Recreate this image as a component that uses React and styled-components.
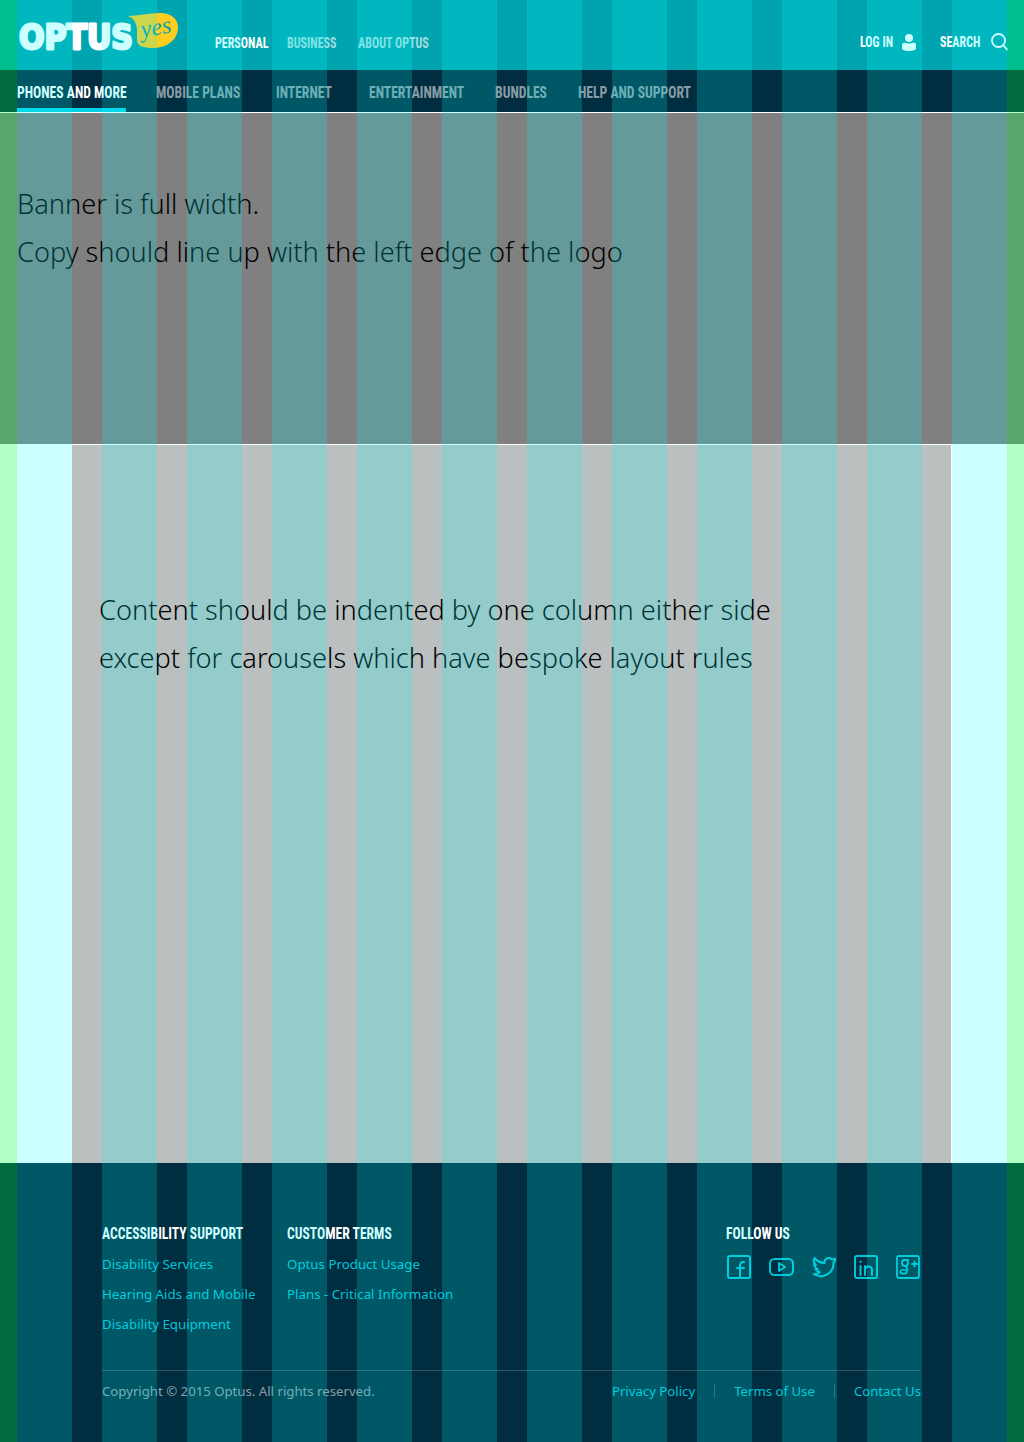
import styled, { createGlobalStyle } from 'styled-components'

const GlobalStyle = createGlobalStyle`
    html, body { margin: 0; padding: 0; background: #fff; }
    body { font-family: "Noto Sans", "DejaVu Sans", sans-serif; }
    a { text-decoration: none; color: inherit; }
`

const condensed = `"Roboto Condensed", Roboto, "Liberation Sans", sans-serif`
const linkColor = '#00c4d6'

const Page = styled.div`
    position: relative;
    width: 1024px;
    height: 1442px;
    overflow: hidden;
`

/* grid overlay, sits on top of the whole page */
const GridOverlay = styled.div`
    position: absolute;
    inset: 0;
    display: flex;
    justify-content: space-between;
    pointer-events: none;
`
const GridMargin = styled.div`
    width: 17px;
    background: rgba(0, 255, 66, .3);
`
const GridColumns = styled.div`
    display: flex;
    gap: 30px;
`
const GridColumn = styled.div`
    width: 55px;
    background: rgba(0, 255, 255, .2);
`

/* the heading face is far narrower than anything installed */
const Narrow = styled.span`
    display: block;
    width: ${p => p.$width}px;
    white-space: nowrap;
    transform: scaleX(.8);
    transform-origin: left center;
`

const TopBar = styled.header`
    height: 70px;
    background: #00a4af;
    display: flex;
    padding: 0 16px 0 18px;
    box-sizing: border-box;
`
const LogoWrap = styled.div`
    width: 197px;
    flex: none;
    padding-top: 9px;
`
const TopLinks = styled.nav`
    display: flex;
    gap: 19px;
    padding-top: 34px;
`
const TopLink = styled.a`
    font-family: ${condensed};
    font-weight: 700;
    font-size: 15px;
    line-height: 18px;
    color: ${p => (p.$active ? '#fff' : 'rgba(255,255,255,.65)')};
`
const TopRight = styled.div`
    margin-left: auto;
    display: flex;
    align-items: center;
    gap: 24px;
    padding-top: 14px;
    height: 56px;
`
const TopAction = styled.a`
    display: flex;
    align-items: center;
    gap: 10px;
    font-family: ${condensed};
    font-weight: 700;
    font-size: 15px;
    color: #fff;
`

const MainNav = styled.nav`
    height: 42px;
    background: #002d40;
    border-bottom: 1px solid #fff;
    display: flex;
    padding-left: 17px;
`
const MainLink = styled.a`
    height: 42px;
    box-sizing: border-box;
    padding-top: 12px;
    margin-right: ${p => p.$gap}px;
    font-family: ${condensed};
    font-weight: 700;
    font-size: 17px;
    line-height: 20px;
    color: ${p => (p.$active ? '#fff' : 'rgba(255,255,255,.55)')};
    border-bottom: 4px solid ${p => (p.$active ? '#00d0e4' : 'transparent')};
`

const Banner = styled.section`
    height: 331px;
    background: #808080;
    padding: 67px 0 0 17px;
    box-sizing: border-box;
`
const Copy = styled.p`
    margin: 0;
    font-family: "Noto Sans", sans-serif;
    font-weight: 300;
    font-size: 27.2px;
    line-height: 48px;
    color: #000;
`
const Content = styled.main`
    height: 718px;
    margin: 1px 73px 0 72px;
    padding: 141px 0 0 27px;
    box-sizing: border-box;
    background: #babfbf;
`

const Footer = styled.footer`
    height: 279px;
    background: #002d40;
    padding: 60px 104px 0 102px;
    box-sizing: border-box;
`
const FooterTop = styled.div`
    display: flex;
    height: 147px;
    border-bottom: 1px solid rgba(255,255,255,.2);
`
const FooterCol = styled.div`
    width: ${p => p.$width}px;
    flex: none;
`
const FooterHeading = styled.h4`
    margin: 0 0 6px;
    font-family: ${condensed};
    font-weight: 700;
    font-size: 17px;
    line-height: 20px;
    color: #fff;
`
const FooterLink = styled.a`
    display: block;
    font-size: 13.3px;
    line-height: 30px;
    color: ${linkColor};
`
const SocialRow = styled.div`
    display: flex;
    align-items: center;
    gap: 18px;
    margin: 12px 0 0 1px;
    height: 24px;
`
const FooterBottom = styled.div`
    display: flex;
    align-items: center;
    height: 40px;
    font-size: 13.2px;
    color: rgba(255,255,255,.55);
`
const LegalLinks = styled.div`
    margin: 0 -1px 0 auto;
    display: flex;
    align-items: center;
`
const LegalLink = styled.a`
    color: ${linkColor};
`
const LegalSep = styled.span`
    width: 1px;
    height: 14px;
    margin: 0 19px;
    background: rgba(255,255,255,.2);
`

const stroke = { fill: 'none', stroke: linkColor, strokeWidth: 2, strokeLinecap: 'round', strokeLinejoin: 'round' }

const LogoMark = () => (
    <svg width="162" height="52" viewBox="0 -4 162 52">
        <path d="M110 3C120 3 130 0 142 0C153 0 160 6 160 14C160 26 150 35 135 35C125 35 119 33 119 27C119 18 121 8 110 3z" fill="#ffcc20" />
        <text
            x="123"
            y="22"
            transform="rotate(-10 138 18)"
            fontFamily="Liberation Serif, serif"
            fontStyle="italic"
            fontSize="24"
            fill="#00a4af"
        >
            yes
        </text>
        <text
            transform="translate(1 36) scale(.91 1)"
            fontFamily="DejaVu Sans, sans-serif"
            fontWeight="700"
            fontSize="33"
            fill="#fff"
            stroke="#fff"
            strokeWidth="2.800"
            strokeLinejoin="round"
        >
            OPTUS
        </text>
    </svg>
)

const UserIcon = () => (
    <svg width="14" height="17" viewBox="0 0 14 17" fill="#fff">
        <circle cx="7" cy="4" r="4" />
        <path d="M0 11c0-1.500 1.500-2.500 3-2.200 2.500 1 5.500 1 8 0 1.500-.3 3-.3 3 2.200v3.500c0 1.500-3 2.500-7 2.500s-7-1-7-2.500z" />
    </svg>
)
const SearchIcon = () => (
    <svg width="17" height="18" viewBox="0 0 17 18" fill="none" stroke="#fff" strokeWidth="1.800" strokeLinecap="round">
        <circle cx="7.500" cy="7.500" r="6.500" />
        <path d="M12.500 12.500l3.500 4" />
    </svg>
)
const FacebookIcon = () => (
    <svg width="24" height="24" viewBox="0 0 24 24" {...stroke}>
        <rect x="1" y="1" width="22" height="22" rx="2" />
        <path d="M13 23V11a3.500 3.500 0 0 1 4-4M10 13h7" />
    </svg>
)
const YoutubeIcon = () => (
    <svg width="25" height="18" viewBox="0 0 25 18" {...stroke}>
        <rect x="1" y="1" width="23" height="16" rx="4.500" />
        <path d="M10 5v8l6-4z" />
    </svg>
)
const TwitterIcon = () => (
    <svg width="24" height="22" viewBox="0 0 24 22" {...stroke}>
        <path d="M23 2.500c-.9.7-1.800 1-2.800 1.100a4.400 4.400 0 0 0-7.700 3.400C8.800 7 5.200 5.300 2.500 2c-1.300 2.500-.6 5.400 1.600 7l-1.900-.5c.2 2.300 1.500 3.800 3.600 4.600l-2 .2c.8 1.700 2 2.600 4 3-1.600 1.300-3.700 2-6 1.900 9.500 5 19.800-.5 19.700-11.500.8-.7 1.500-1.500 1.700-2.600z" />
    </svg>
)
const LinkedinIcon = () => (
    <svg width="24" height="24" viewBox="0 0 24 24" {...stroke}>
        <rect x="1" y="1" width="22" height="22" rx="2" />
        <path d="M6.500 11v9M6.500 6.500v.5M11 20v-9M11 15a3.500 3.500 0 0 1 7 0v5" />
    </svg>
)
const GooglePlusIcon = () => (
    <svg width="24" height="24" viewBox="0 0 24 24" {...stroke} strokeWidth="1.800">
        <rect x="1" y="1" width="22" height="22" rx="2" />
        <circle cx="9" cy="8" r="3" />
        <path d="M12 5h-4M9 11c3 2 3 3 2 4.500M11 16.500c-.5-1.500-3-2-5-1.500s-2.500 3 0 3.500 5 0 5-2M16 9h5M18.500 6.500v5" />
    </svg>
)

function App() {
    return (
        <>
            <GlobalStyle />
            <Page>
                <TopBar>
                    <LogoWrap>
                        <LogoMark />
                    </LogoWrap>
                    <TopLinks>
                        <TopLink $active><Narrow $width={53}>PERSONAL</Narrow></TopLink>
                        <TopLink><Narrow $width={52}>BUSINESS</Narrow></TopLink>
                        <TopLink><Narrow $width={70}>ABOUT OPTUS</Narrow></TopLink>
                    </TopLinks>
                    <TopRight>
                        <TopAction>
                            <Narrow $width={32}>LOG IN</Narrow>
                            <UserIcon />
                        </TopAction>
                        <TopAction>
                            <Narrow $width={41}>SEARCH</Narrow>
                            <SearchIcon />
                        </TopAction>
                    </TopRight>
                </TopBar>
                <MainNav>
                    <MainLink $active $gap={30}><Narrow $width={109}>PHONES AND MORE</Narrow></MainLink>
                    <MainLink $gap={37}><Narrow $width={83}>MOBILE PLANS</Narrow></MainLink>
                    <MainLink $gap={36}><Narrow $width={57}>INTERNET</Narrow></MainLink>
                    <MainLink $gap={30}><Narrow $width={96}>ENTERTAINMENT</Narrow></MainLink>
                    <MainLink $gap={30}><Narrow $width={53}>BUNDLES</Narrow></MainLink>
                    <MainLink $gap={0}><Narrow $width={112}>HELP AND SUPPORT</Narrow></MainLink>
                </MainNav>
                <Banner>
                    <Copy>Banner is full width.</Copy>
                    <Copy>Copy should line up with the left edge of the logo</Copy>
                </Banner>
                <Content>
                    <Copy>Content should be indented by one column either side</Copy>
                    <Copy>except for carousels which have bespoke layout rules</Copy>
                </Content>
                <Footer>
                    <FooterTop>
                        <FooterCol $width={185}>
                            <FooterHeading><Narrow $width={142}>ACCESSIBILITY SUPPORT</Narrow></FooterHeading>
                            <FooterLink>Disability Services</FooterLink>
                            <FooterLink>Hearing Aids and Mobile</FooterLink>
                            <FooterLink>Disability Equipment</FooterLink>
                        </FooterCol>
                        <FooterCol $width={439}>
                            <FooterHeading><Narrow $width={106}>CUSTOMER TERMS</Narrow></FooterHeading>
                            <FooterLink>Optus Product Usage</FooterLink>
                            <FooterLink>Plans - Critical Information</FooterLink>
                        </FooterCol>
                        <FooterCol $width={194}>
                            <FooterHeading><Narrow $width={65}>FOLLOW US</Narrow></FooterHeading>
                            <SocialRow>
                                <FacebookIcon />
                                <YoutubeIcon />
                                <TwitterIcon />
                                <LinkedinIcon />
                                <GooglePlusIcon />
                            </SocialRow>
                        </FooterCol>
                    </FooterTop>
                    <FooterBottom>
                        Copyright © 2015 Optus. All rights reserved.
                        <LegalLinks>
                            <LegalLink>Privacy Policy</LegalLink>
                            <LegalSep />
                            <LegalLink>Terms of Use</LegalLink>
                            <LegalSep />
                            <LegalLink>Contact Us</LegalLink>
                        </LegalLinks>
                    </FooterBottom>
                </Footer>
                <GridOverlay>
                    <GridMargin />
                    <GridColumns>
                        {Array.from({ length: 12 }, (_, i) => <GridColumn key={i} />)}
                    </GridColumns>
                    <GridMargin />
                </GridOverlay>
            </Page>
        </>
    )
}

export default App
